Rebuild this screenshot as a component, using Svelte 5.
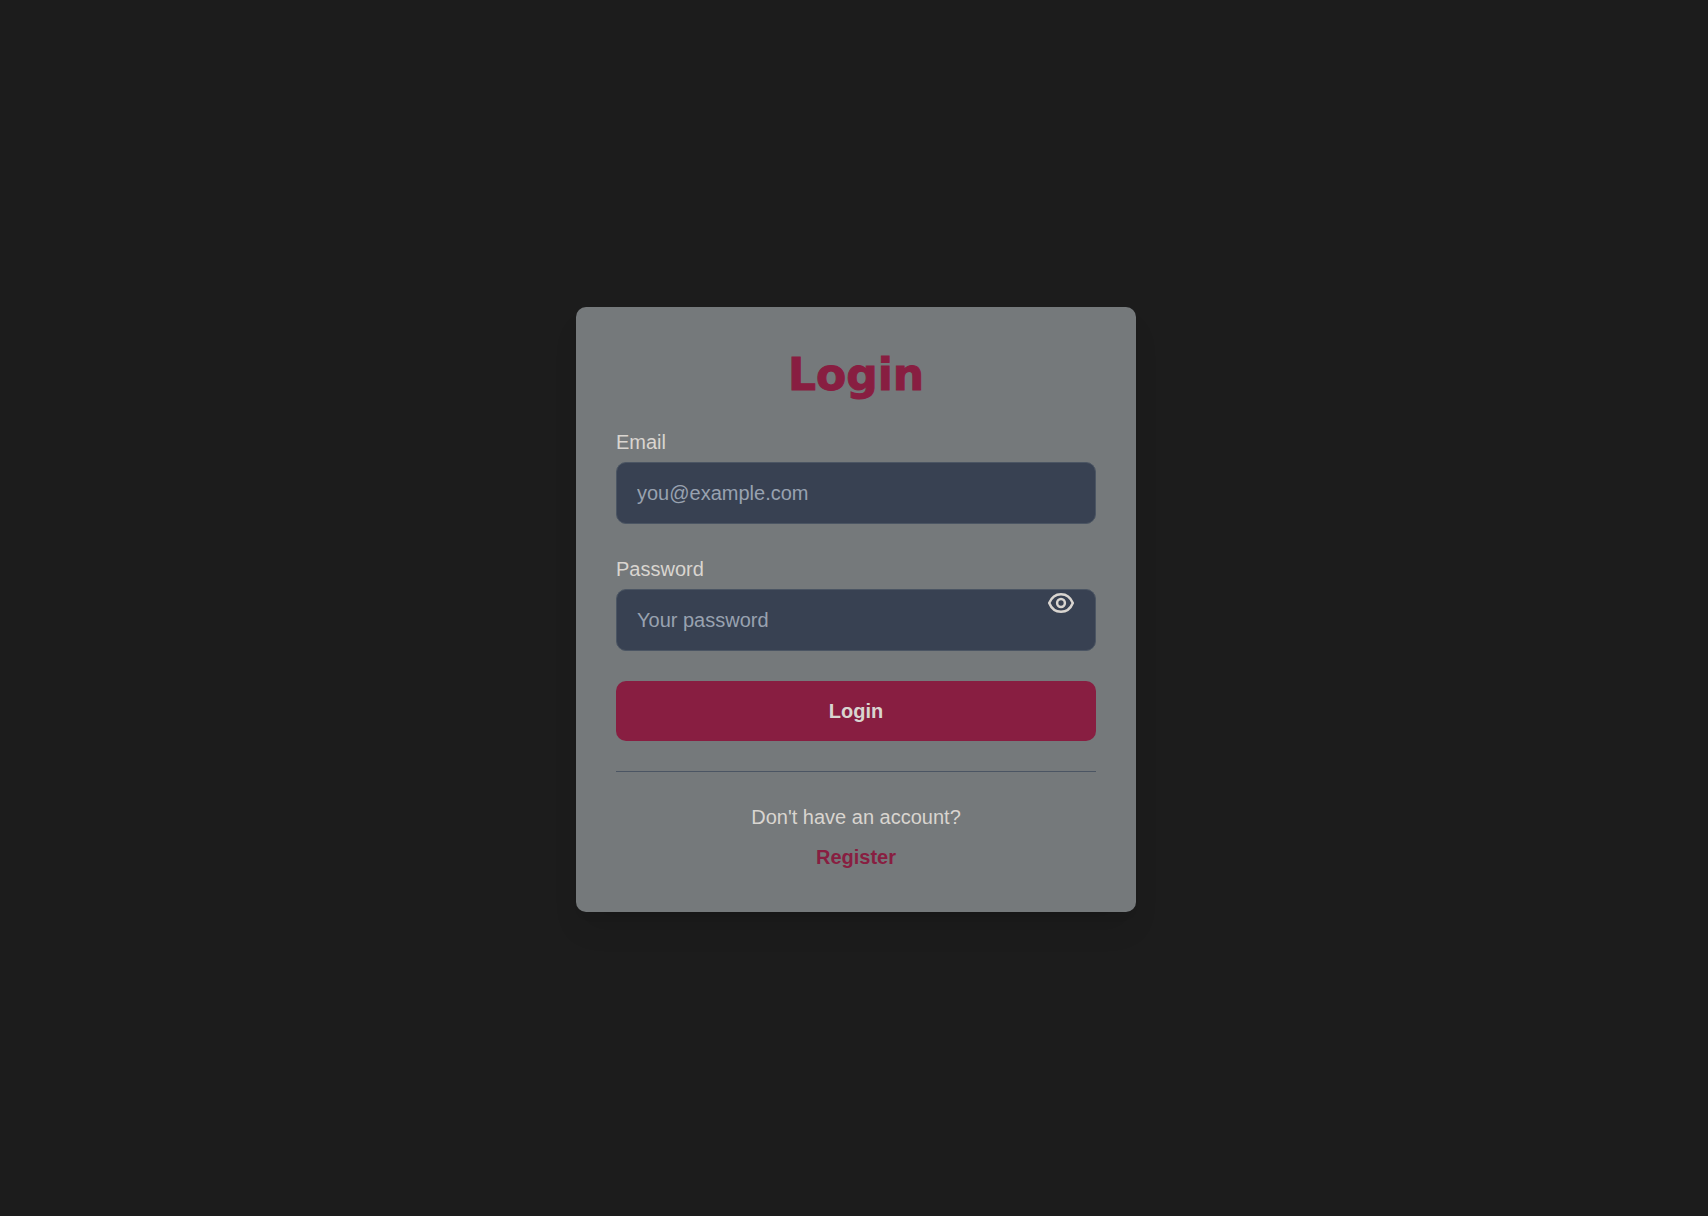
<script>
  let email = $state('');
  let password = $state('');
  let visible = $state(false);
</script>

<main class="page">
  <section class="card">
    <h1>Login</h1>
    <form onsubmit={(e) => e.preventDefault()}>
      <div class="field">
        <label for="email">Email</label>
        <input id="email" type="email" placeholder="you@example.com" bind:value={email} />
      </div>
      <div class="field">
        <label for="password">Password</label>
        <div class="password">
          <input
            id="password"
            type={visible ? 'text' : 'password'}
            placeholder="Your password"
            bind:value={password}
          />
          <button
            class="toggle"
            type="button"
            aria-label={visible ? 'Hide password' : 'Show password'}
            onclick={() => (visible = !visible)}
          >
            <svg viewBox="0 0 30 24" aria-hidden="true">
              <path d="M3.200 12C5.400 6.600 9.800 3.200 15 3.200S24.600 6.600 26.800 12C24.600 17.400 20.200 20.800 15 20.800S5.400 17.400 3.200 12Z" />
              <circle cx="15" cy="12" r="3.900" />
            </svg>
          </button>
        </div>
      </div>
      <button class="submit" type="submit">Login</button>
    </form>
    <footer>
      <p>Don't have an account?</p>
      <a href="#register">Register</a>
    </footer>
  </section>
</main>

<style>
  :global(body) {
    background: #1c1c1c;
  }

  .page {
    box-sizing: border-box;
    min-height: 100vh;
    display: flex;
    align-items: center;
    justify-content: center;
    padding: 3px 0 0 4px;
    color: #d9d5d0;
    font-family: 'Liberation Sans', Arial, sans-serif;
    font-size: 20px;
    line-height: 30px;
  }

  .card {
    box-sizing: border-box;
    width: 100%;
    max-width: 560px;
    padding: 40px;
    border-radius: 10px;
    background: #75797b;
    box-shadow:
      0 20px 30px -6px rgb(0 0 0 / 0.1),
      0 8px 12px -8px rgb(0 0 0 / 0.1);
  }

  h1 {
    margin: 0 0 24px;
    color: #881e41;
    font-family: 'DejaVu Sans', sans-serif;
    font-size: 44px;
    font-weight: 900;
    line-height: 56px;
    text-align: center;
    -webkit-text-stroke: 1px #881e41;
  }

  form {
    display: flex;
    flex-direction: column;
    gap: 30px;
  }

  .field {
    display: flex;
    flex-direction: column;
    gap: 5px;
  }

  input {
    box-sizing: border-box;
    display: block;
    width: 100%;
    height: 62px;
    padding: 15px 20px;
    border: 1px solid #4b5563;
    border-radius: 10px;
    background: #384152;
    color: #d9d5d0;
    font: inherit;
  }

  input::placeholder {
    color: #98a2b0;
    opacity: 1;
  }

  .password {
    position: relative;
  }

  .toggle {
    position: absolute;
    top: 2px;
    right: 20px;
    padding: 0;
    border: 0;
    background: none;
    color: #d9d5d0;
    cursor: pointer;
  }

  .toggle svg {
    display: block;
    width: 30px;
    height: 24px;
    fill: none;
    stroke: currentColor;
    stroke-width: 2.500;
    stroke-linejoin: round;
  }

  .submit {
    padding: 15px 20px;
    border: 0;
    border-radius: 10px;
    background: #881e41;
    color: #d9d5d0;
    font: inherit;
    font-weight: 700;
    cursor: pointer;
  }

  footer {
    display: flex;
    flex-direction: column;
    align-items: center;
    gap: 10px;
    margin-top: 30px;
    padding-top: 30px;
    border-top: 1px solid #4b5563;
  }

  p {
    margin: 0;
  }

  a {
    color: #881e41;
    font-weight: 700;
    text-decoration: none;
  }
</style>
